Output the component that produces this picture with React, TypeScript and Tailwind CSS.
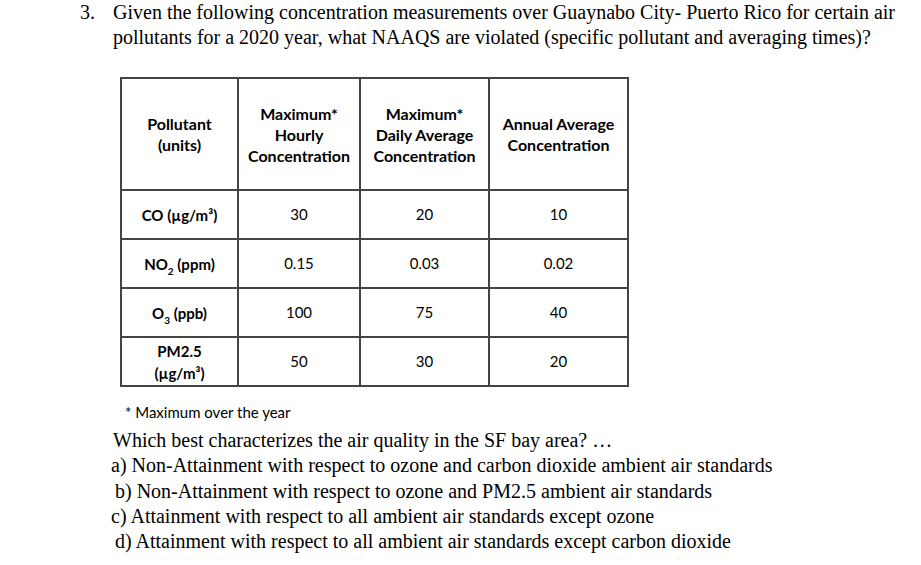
import React from "react";

const rows = [
  { label: <>CO (µg/m³)</>, v: ["30", "20", "10"] },
  {
    label: (
      <>
        NO<sub className="text-[10px] align-[-3px]">2</sub> (ppm)
      </>
    ),
    v: ["0.15", "0.03", "0.02"],
  },
  {
    label: (
      <>
        O<sub className="text-[10px] align-[-3px]">3</sub> (ppb)
      </>
    ),
    v: ["100", "75", "40"],
  },
  {
    label: (
      <>
        PM2.5
        <br />
        (µg/m³)
      </>
    ),
    v: ["50", "30", "20"],
  },
];

const options = [
  { text: "a) Non-Attainment with respect to ozone and carbon dioxide ambient air standards", indent: false },
  { text: "b) Non-Attainment with respect to ozone and PM2.5 ambient air standards", indent: true },
  { text: "c) Attainment with respect to all ambient air standards except ozone", indent: false },
  { text: "d) Attainment with respect to all ambient air standards except carbon dioxide", indent: true },
];

export default function App() {
  const serif = "font-['Liberation_Serif',serif]";
  const sans = "font-['Lato','Noto_Sans',sans-serif]";

  return (
    <div className="w-[921px] h-[565px] bg-white text-black overflow-hidden">
      {/* Question heading */}
      <div className={`${serif} text-[20px] leading-[25px] flex`}>
        <span className="w-[33px] pl-[80px] box-content shrink-0">3.</span>
        <p className="w-[800px]">
          Given the following concentration measurements over Guaynabo City- Puerto Rico for certain air
          pollutants for a 2020 year, what NAAQS are violated (specific pollutant and averaging times)?
        </p>
      </div>

      {/* Data table */}
      <table className={`${sans} ml-[120px] mt-[27px] border-collapse text-[15px] text-center`}>
        <thead>
          <tr className="h-[112px] text-[16px]">
            <th className="w-[117px] border-2 border-[#444] font-bold leading-[21px]">
              Pollutant
              <br />
              (units)
            </th>
            <th className="w-[122px] border-2 border-[#444] font-bold leading-[21px]">
              Maximum*
              <br />
              Hourly
              <br />
              Concentration
            </th>
            <th className="w-[129px] border-2 border-[#444] font-bold leading-[21px]">
              Maximum*
              <br />
              Daily Average
              <br />
              Concentration
            </th>
            <th className="w-[139px] border-2 border-[#444] font-bold leading-[21px]">
              Annual Average
              <br />
              Concentration
            </th>
          </tr>
        </thead>
        <tbody>
          {rows.map((r, i) => (
            <tr key={i} className="h-[49px]">
              <td className="border-2 border-[#444] font-bold leading-[22px]">{r.label}</td>
              {r.v.map((x, j) => (
                <td key={j} className="border-2 border-[#444]">
                  {x}
                </td>
              ))}
            </tr>
          ))}
        </tbody>
      </table>

      <p className={`${sans} text-[15px] ml-[125px] mt-[16px] leading-[18px]`}>* Maximum over the year</p>

      {/* Answer choices */}
      <div className={`${serif} text-[20px] leading-[25.3px] ml-[111px] mt-[7px]`}>
        <p className="ml-[2px]">Which best characterizes the air quality in the SF bay area? …</p>
        {options.map((o) => (
          <p key={o.text} className={o.indent ? "pl-[4px]" : ""}>
            {o.text}
          </p>
        ))}
      </div>
    </div>
  );
}
